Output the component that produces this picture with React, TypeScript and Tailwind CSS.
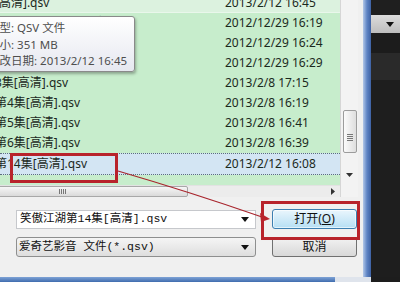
import React from "react";

type Row = { name: string; date: string; hover?: boolean; selected?: boolean };

const rows: Row[] = [
  { name: "笑傲江湖[高清].qsv", date: "2013/2/12 16:45", hover: true },
  { name: "笑傲江湖第1集[高清]-新版电视.qsv", date: "2012/12/29 16:19" },
  { name: "笑傲江湖第2集[高清]-新版电视.qsv", date: "2012/12/29 16:24" },
  { name: "笑傲江湖第3集[高清]-新版电视.qsv", date: "2012/12/29 16:29" },
  { name: "笑傲江湖3集[高清].qsv", date: "2013/2/8 17:15" },
  { name: "笑傲江湖第4集[高清].qsv", date: "2013/2/8 16:19" },
  { name: "笑傲江湖第5集[高清].qsv", date: "2013/2/8 16:41" },
  { name: "笑傲江湖第6集[高清].qsv", date: "2013/2/8 16:39" },
  { name: "笑傲江湖第14集[高清].qsv", date: "2013/2/12 16:08", selected: true },
];

const uiFont = { fontFamily: '"Noto Sans", "Noto Sans CJK SC", sans-serif' };
const simFont = { fontFamily: '"Liberation Mono", "Noto Sans CJK SC", monospace' };

function DownTri() {
  return (
    <svg width="8" height="5" viewBox="0 0 8 5" className="shrink-0">
      <path d="M0 0h8L4 5z" fill="#111" />
    </svg>
  );
}

function FileRow({ row }: { row: Row }) {
  return (
    <div
      className={`flex items-center text-[12px] text-[#1b291d] ${
        row.selected
          ? "h-[22px] bg-[#d3e5f3] border-y border-dotted border-[#5d6f7d]"
          : row.hover
            ? "h-[20px] bg-[#dcf2df] border-b border-[#e9f7eb]"
            : "h-[20px]"
      }`}
    >
      <div className="w-[225px] overflow-hidden whitespace-nowrap">
        <span className="ml-[-53px]">{row.name}</span>
      </div>
      <div className="whitespace-nowrap">{row.date}</div>
    </div>
  );
}

export default function App() {
  return (
    <div className="relative w-[400px] h-[282px] overflow-hidden flex flex-col bg-[#1d1d1d]" style={uiFont}>
      <div className="flex h-[277px]">
        {/* dialog body */}
        <div className="w-[363px] bg-[#f0f0f0] flex flex-col">
          <div className="flex h-[197px]">
            <div className="w-[341px] flex flex-col border-r border-[#d6d6d6]">
              <div className="relative h-[185px] bg-[#c7edcc] overflow-hidden">
                <div className="-mt-[7px]">
                  {rows.map((r) => (
                    <FileRow key={r.date + r.name} row={r} />
                  ))}
                </div>

                {/* tooltip */}
                <div className="absolute left-[-26px] top-[16px] w-[161px] h-[56px] rounded-[3px] border border-[#8a8a8a] bg-gradient-to-b from-[#ffffff] to-[#e6e8f0] shadow-[1px_2px_3px_rgba(0,0,0,0.3)] pl-[13px] pt-[3px] text-[11.5px] leading-[16.5px] text-[#4e4e4e] whitespace-nowrap">
                  <div>类型: QSV 文件</div>
                  <div>大小: 351 MB</div>
                  <div>修改日期: 2013/2/12 16:45</div>
                </div>
              </div>

              {/* horizontal scrollbar */}
              <div className="h-[12px] flex items-center bg-[#ececec] border-t border-[#e2e2e2]">
                <div className="ml-[-64px] w-[252px] h-[11px] rounded-[2px] border border-[#a8a8a8] bg-gradient-to-b from-[#f6f6f6] to-[#dadada] flex items-center justify-center gap-[1px]">
                  <span className="w-[1px] h-[5px] bg-[#777]" />
                  <span className="w-[1px] h-[5px] bg-[#777]" />
                  <span className="w-[1px] h-[5px] bg-[#777]" />
                  <span className="w-[1px] h-[5px] bg-[#777]" />
                </div>
                <div className="flex-1" />
                <svg width="4" height="7" viewBox="0 0 4 7" className="mr-[5px]">
                  <path d="M0 0l4 3.5L0 7z" fill="#333" />
                </svg>
              </div>
            </div>

            {/* vertical scrollbar */}
            <div className="w-[17px] flex flex-col items-center bg-[#f3f3f3]">
              <div className="h-[110px]" />
              <div className="w-[14px] h-[43px] rounded-[2px] border border-[#9c9c9c] bg-gradient-to-r from-[#fbfbfb] to-[#dedede] flex flex-col items-center justify-end pb-[11px] gap-[1px]">
                <span className="w-[6px] h-[1px] bg-[#777]" />
                <span className="w-[6px] h-[1px] bg-[#777]" />
                <span className="w-[6px] h-[1px] bg-[#777]" />
                <span className="w-[6px] h-[1px] bg-[#777]" />
              </div>
              <div className="mt-[20px]">
                <svg width="7" height="4" viewBox="0 0 7 4">
                  <path d="M0 0h7L3.5 4z" fill="#333" />
                </svg>
              </div>
            </div>
          </div>

          {/* form */}
          <div className="flex flex-col pl-[16px] pt-[12px] gap-[8px]">
            <div className="flex items-center gap-[16px]">
              <div className="w-[240px] h-[19px] bg-white border border-[#c6c8cc] flex items-center pl-[3px] pr-[6px] text-[11.5px] text-[#111]" style={simFont}>
                <span className="flex-1 whitespace-nowrap">笑傲江湖第14集[高清].qsv</span>
                <DownTri />
              </div>
              <div className="w-[85px] h-[20px] rounded-[3px] border border-[#3c7fb1] bg-gradient-to-b from-[#eaf6fd] to-[#b6dff4] flex items-center justify-center text-[12px] text-[#111] shadow-[inset_0_0_0_1px_rgba(255,255,255,0.6)]">
                打开(<span className="underline">O</span>)
              </div>
            </div>
            <div className="flex items-center gap-[16px]">
              <div className="w-[240px] h-[20px] rounded-[3px] bg-gradient-to-b from-[#f5f5f5] to-[#dedede] border border-[#8e8f8f] flex items-center pl-[2px] pr-[6px] text-[11.5px] text-[#111]" style={simFont}>
                <span className="flex-1 whitespace-nowrap">爱奇艺影音 文件(*.qsv)</span>
                <DownTri />
              </div>
              <div className="w-[85px] h-[20px] rounded-[3px] border border-[#707070] bg-gradient-to-b from-[#f2f2f2] to-[#d8d8d8] flex items-center justify-center text-[12px] text-[#111]">
                取消
              </div>
            </div>
          </div>
        </div>

        {/* window border */}
        <div className="w-[8px] bg-gradient-to-r from-[#b3c8e8] via-[#5f84c4] to-[#3e62a4]" />

        {/* dark background area */}
        <div className="flex-1 flex flex-col">
          <div className="h-[15px] bg-[#1f1f1f]" />
          <div className="h-[18px] bg-gradient-to-b from-[#dcdcdc] to-[#bdbdbd] flex items-center justify-end pr-[6px]">
            <DownTri />
          </div>
          <div className="h-[20px] bg-[#1c1c1c]" />
          <div className="h-[27px] bg-[#2a2a2a]" />
          <div className="flex-1 bg-[#1e1e1e]" />
        </div>
      </div>

      {/* taskbar strip */}
      <div className="h-[5px] flex">
        <div className="w-[335px] bg-gradient-to-b from-[#7fa3d6] to-[#3f6cae]" />
        <div className="w-[36px] bg-[#dfe4ec]" />
        <div className="flex-1 bg-[#1d1d1d]" />
      </div>

      {/* red annotations */}
      <div className="absolute left-[10px] top-[153px] w-[108px] h-[30px] border-[3px] border-[#b8232b]" />
      <div className="absolute left-[261px] top-[201px] w-[99px] h-[39px] border-[3px] border-[#b8232b]" />
      <svg className="absolute left-0 top-0" width="400" height="282" viewBox="0 0 400 282">
        <path d="M118 171 Q190 192 262 217" stroke="#a8242c" strokeWidth="1.2" fill="none" />
        <path d="M270 219 L260 213 L261 222 Z" fill="#b8232b" />
      </svg>
    </div>
  );
}
